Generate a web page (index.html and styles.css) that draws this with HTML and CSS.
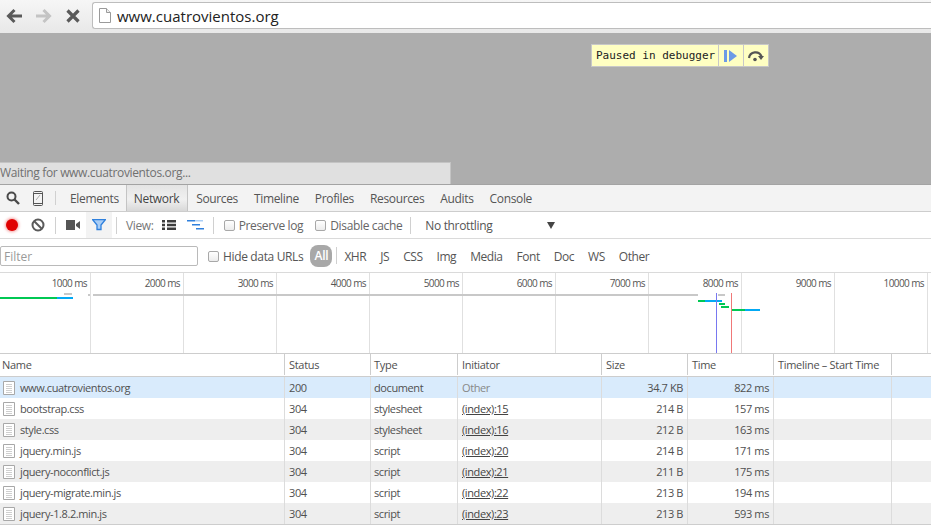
FILE: index.html
```
<!DOCTYPE html>
<html lang="en">
<head>
<meta charset="utf-8">
<title>www.cuatrovientos.org</title>
<link rel="stylesheet" href="styles.css">
</head>
<body>
<header class="browser">
  <svg class="nav" width="18" height="16" viewBox="0 0 18 16"><path d="M17 8H5M9.500 2 3.500 8l6 6" fill="none" stroke="#5a5a5a" stroke-width="3"/></svg>
  <svg class="nav" width="18" height="16" viewBox="0 0 18 16"><path d="M1 8h12M8.500 2l6 6-6 6" fill="none" stroke="#c4c4c4" stroke-width="3"/></svg>
  <svg class="nav" width="16" height="16" viewBox="0 0 16 16"><path d="M2.500 2.500l11 11M13.500 2.500l-11 11" fill="none" stroke="#5a5a5a" stroke-width="3.200"/></svg>
  <div class="omnibox">
    <svg width="12" height="15" viewBox="0 0 12 15"><path d="M.5.500h7l4 4v10H.5z" fill="#fff" stroke="#9a9a9a"/><path d="M7.500.500v4h4" fill="#eee" stroke="#9a9a9a"/></svg>
    <span>www.cuatrovientos.org</span>
  </div>
</header>

<section class="page">
  <div class="paused">
    <span class="paused-text">Paused in debugger</span>
    <span class="paused-btn"><svg width="14" height="12" viewBox="0 0 14 12"><path d="M0 0h3v12H0z" fill="#6d9be6"/><path d="M5 0l8 6-8 6z" fill="#6d9be6"/></svg></span>
    <span class="paused-btn"><svg width="18" height="12" viewBox="0 0 18 12"><path d="M2 8a6.500 6.500 0 0 1 12.500-1.500" fill="none" stroke="#555" stroke-width="2.200"/><path d="M11 6h6l-3 4z" fill="#555"/><circle cx="8" cy="9.500" r="1.800" fill="#555"/></svg></span>
  </div>
  <div class="status-bubble">Waiting for www.cuatrovientos.org...</div>
</section>

<nav class="tabs">
  <svg class="tab-icon" width="14" height="14" viewBox="0 0 14 14"><circle cx="5.500" cy="5.500" r="4" fill="none" stroke="#4a4a4a" stroke-width="2"/><path d="M8.500 8.500l4.500 4.500" stroke="#4a4a4a" stroke-width="2.400"/></svg>
  <svg class="tab-icon device" width="10" height="15" viewBox="0 0 10 15"><rect x=".5" y=".5" width="9" height="14" rx="1" fill="none" stroke="#555"/><path d="M1 2.500h8M1 12.500h8" stroke="#555"/><path d="M3 9l4-5" stroke="#aaa"/></svg>
  <i class="sep tab-sep"></i>
  <span class="tab">Elements</span>
  <span class="tab active">Network</span>
  <span class="tab">Sources</span>
  <span class="tab">Timeline</span>
  <span class="tab">Profiles</span>
  <span class="tab">Resources</span>
  <span class="tab">Audits</span>
  <span class="tab">Console</span>
</nav>

<div class="toolbar">
  <span class="record"></span>
  <svg class="tool-clear" width="14" height="14" viewBox="0 0 14 14"><circle cx="7" cy="7" r="5.500" fill="none" stroke="#5a5a5a" stroke-width="2"/><path d="M3 3l8 8" stroke="#5a5a5a" stroke-width="2"/></svg>
  <i class="sep sep-a"></i>
  <svg class="tool-cam" width="14" height="10" viewBox="0 0 14 10"><path d="M0 0h9v10H0zM10 4l4-3v8l-4-3z" fill="#555"/></svg>
  <span class="filter-btn"><svg width="14" height="12" viewBox="0 0 14 12"><path d="M.5.500h13l-4.500 5.500v4.500H5V6z" fill="#a9cdf5" stroke="#2f80dd" stroke-width="1.300"/></svg></span>
  <i class="sep"></i>
  <span class="view-label">View:</span>
  <svg class="view-list" width="14" height="10" viewBox="0 0 14 10"><path d="M0 0h3v2.500H0zM5 0h9v2.500H5zM0 3.750h3v2.500H0zM5 3.750h9v2.500H5zM0 7.500h3V10H0zM5 7.500h9V10H5z" fill="#3c3c3c"/></svg>
  <svg class="view-wf" width="17" height="10" viewBox="0 0 17 10"><path d="M0 0h8v1.500H0zM5 4h8v1.500H5zM9 8h8v1.500H9z" fill="#2f80dd"/><path d="M8 0h8v1.500H8z" fill="#a9cdf5"/></svg>
  <i class="sep"></i>
  <label class="check preserve"><i class="box"></i>Preserve log</label>
  <label class="check cache"><i class="box"></i>Disable cache</label>
  <i class="sep"></i>
  <span class="throttle">No throttling</span>
  <span class="caret"></span>
</div>

<div class="filterbar">
  <input class="filter-input" type="text" placeholder="Filter">
  <label class="check hide-urls"><i class="box"></i>Hide data URLs</label>
  <span class="pill">All</span>
  <i class="sep pill-sep"></i>
  <span class="type">XHR</span>
  <span class="type">JS</span>
  <span class="type">CSS</span>
  <span class="type">Img</span>
  <span class="type">Media</span>
  <span class="type">Font</span>
  <span class="type">Doc</span>
  <span class="type">WS</span>
  <span class="type">Other</span>
</div>

<section class="overview">
  <div class="tick first">1000 ms</div>
  <div class="tick">2000 ms</div>
  <div class="tick">3000 ms</div>
  <div class="tick">4000 ms</div>
  <div class="tick">5000 ms</div>
  <div class="tick">6000 ms</div>
  <div class="tick">7000 ms</div>
  <div class="tick">8000 ms</div>
  <div class="tick">9000 ms</div>
  <div class="tick">10000 ms</div>
  <i class="bar gray g1"></i>
  <i class="bar gray g2"></i>
  <i class="bar gray g3"></i>
  <i class="bar gray g4"></i>
  <i class="bar green b1"></i>
  <i class="bar blue b2"></i>
  <i class="bar green b3"></i>
  <i class="bar blue b4"></i>
  <i class="bar green b5"></i>
  <i class="bar green b6"></i>
  <i class="bar green b7"></i>
  <i class="bar blue b8"></i>
  <i class="mark dom"></i>
  <i class="mark load"></i>
</section>

<section class="grid">
  <div class="row head">
    <div>Name</div><div>Status</div><div>Type</div><div>Initiator</div><div>Size</div><div>Time</div><div>Timeline – Start Time</div><div></div>
  </div>
  <div class="row selected">
    <div class="name"><svg class="file"><use href="#doc"/></svg>www.cuatrovientos.org</div><div>200</div><div>document</div><div class="other">Other</div><div class="num">34.7 KB</div><div class="num">822 ms</div><div></div><div></div>
  </div>
  <div class="row">
    <div class="name"><svg class="file"><use href="#doc"/></svg>bootstrap.css</div><div>304</div><div>stylesheet</div><div><a>(index):15</a></div><div class="num">214 B</div><div class="num">157 ms</div><div></div><div></div>
  </div>
  <div class="row alt">
    <div class="name"><svg class="file"><use href="#doc"/></svg>style.css</div><div>304</div><div>stylesheet</div><div><a>(index):16</a></div><div class="num">212 B</div><div class="num">163 ms</div><div></div><div></div>
  </div>
  <div class="row">
    <div class="name"><svg class="file"><use href="#doc"/></svg>jquery.min.js</div><div>304</div><div>script</div><div><a>(index):20</a></div><div class="num">214 B</div><div class="num">171 ms</div><div></div><div></div>
  </div>
  <div class="row alt">
    <div class="name"><svg class="file"><use href="#doc"/></svg>jquery-noconflict.js</div><div>304</div><div>script</div><div><a>(index):21</a></div><div class="num">211 B</div><div class="num">175 ms</div><div></div><div></div>
  </div>
  <div class="row">
    <div class="name"><svg class="file"><use href="#doc"/></svg>jquery-migrate.min.js</div><div>304</div><div>script</div><div><a>(index):22</a></div><div class="num">213 B</div><div class="num">194 ms</div><div></div><div></div>
  </div>
  <div class="row alt">
    <div class="name"><svg class="file"><use href="#doc"/></svg>jquery-1.8.2.min.js</div><div>304</div><div>script</div><div><a>(index):23</a></div><div class="num">213 B</div><div class="num">593 ms</div><div></div><div></div>
  </div>
</section>

<svg class="defs" width="0" height="0">
  <symbol id="doc" viewBox="0 0 12 14">
    <path d="M.5.500h11v13H.5z" fill="#fff" stroke="#a8a8a8"/>
    <path d="M3 3.500h6M3 5.500h6M3 7.500h6M3 9.500h6M3 11.500h6" stroke="#cfcfcf"/>
  </symbol>
</svg>
</body>
</html>
```

FILE: styles.css
```
* { box-sizing: border-box; }
html, body { margin: 0; padding: 0; }
body {
  width: 931px;
  height: 527px;
  overflow: hidden;
  background: #fff;
  font-family: "Open Sans", "Noto Sans", sans-serif;
  font-size: 12px;
  letter-spacing: -0.35px;
  color: #444;
}
i { display: block; font-style: normal; }

/* browser chrome */
.browser {
  height: 33px;
  display: flex;
  align-items: center;
  padding: 0 0 2px 5px;
  background: linear-gradient(#f6f6f6, #e8e8e8);
}
.nav { margin-right: 12px; flex: none; }
.browser .nav:nth-child(3) { margin-right: 11px; }
.omnibox {
  flex: 1;
  align-self: flex-start;
  height: 27px;
  margin-top: 2px;
  display: flex;
  align-items: center;
  gap: 6px;
  padding-left: 6px;
  background: #fff;
  border: 1px solid #bdbdbd;
  border-right: 0;
  border-radius: 3px 0 0 3px;
  font-size: 15px;
  letter-spacing: 0;
  color: #222;
}

/* page */
.page {
  position: relative;
  height: 151px;
  background: #adadad;
}
.paused {
  position: absolute;
  left: 591px;
  top: 11px;
  height: 23px;
  display: flex;
  background: #ffffc2;
  border: 1px solid #c8c8c8;
  font-family: "DejaVu Sans Mono", "Liberation Mono", monospace;
  font-size: 11px;
  letter-spacing: 0;
  color: #222;
}
.paused-text { padding: 4px 3px 0 4px; white-space: nowrap; }
.paused-btn {
  display: flex;
  align-items: center;
  justify-content: center;
  width: 25px;
  border-left: 1px solid #c8c8c8;
}
.status-bubble {
  position: absolute;
  left: 0;
  bottom: 0;
  width: 451px;
  height: 22px;
  padding: 1px 0 0 0;
  background: #e0e0e0;
  border-top: 1px solid #c4c4c4;
  border-right: 1px solid #c4c4c4;
  font-size: 12px;
  color: #707070;
}

/* tabs */
.tabs {
  height: 28px;
  display: flex;
  align-items: stretch;
  background: #f3f3f3;
  border-top: 1px solid #a3a3a3;
  border-bottom: 1px solid #cdcdcd;
}
.tab-icon { align-self: center; margin-left: 6px; flex: none; }
.device { margin-left: 13px; }
.tab-sep { margin: 6px 6px 6px 12px; }
.tab {
  display: flex;
  align-items: center;
  padding: 0 8px;
  color: #555;
}
.tab:nth-of-type(1) { padding-right: 7px; }
.tab.active {
  padding: 0 8px 0 7px;
  color: #444;
  background: linear-gradient(#e4e4e4, #f0f0f0 55%, #d8d8d8);
  border-left: 1px solid #c4c4c4;
  border-right: 1px solid #c4c4c4;
}
.sep {
  flex: none;
  width: 1px;
  background: #d0d0d0;
}

/* toolbar */
.toolbar {
  height: 27px;
  display: flex;
  align-items: center;
  background: #fff;
  border-bottom: 1px solid #dadada;
}
.toolbar .sep { height: 17px; }
.record {
  width: 12px;
  height: 12px;
  margin-left: 6px;
  border-radius: 50%;
  background: #e00000;
  box-shadow: 0 0 3px 1px #f4a0a0;
}
.tool-clear { margin-left: 13px; flex: none; }
.sep-a { margin-left: 10px; }
.tool-cam { margin-left: 10px; flex: none; }
.filter-btn {
  width: 26px;
  height: 26px;
  margin-left: 6px;
  margin-right: 4px;
  display: flex;
  align-items: center;
  justify-content: center;
  background: #f3f3f3;
}
.view-label { margin-left: 9px; color: #777; }
.view-list { margin-left: 8px; flex: none; }
.view-wf { margin-left: 11px; margin-right: 9px; flex: none; }
.check {
  display: flex;
  align-items: center;
  color: #666;
  white-space: nowrap;
}
.preserve { margin-left: 10px; }
.cache { margin-left: 12px; margin-right: 8px; }
.box {
  width: 11px;
  height: 11px;
  margin-right: 4px;
  border: 1px solid #a8a8a8;
  border-radius: 2px;
  background: linear-gradient(#fff, #ececec);
}
.throttle { margin-left: 14px; width: 122px; color: #555; }
.caret {
  width: 0;
  height: 0;
  border-left: 4px solid transparent;
  border-right: 4px solid transparent;
  border-top: 7px solid #444;
}

/* filter bar */
.filterbar {
  height: 34px;
  display: flex;
  align-items: center;
  background: #fff;
  border-bottom: 1px solid #dadada;
}
.filterbar > span, .hide-urls { padding-top: 1px; }
.filter-input {
  width: 198px;
  height: 20px;
  padding: 1px 3px 0;
  border: 1px solid #bababa;
  border-radius: 2px;
  background: #fff;
  font: inherit;
  outline: 0;
}
.filter-input::placeholder { color: #9a9a9a; opacity: 1; }
.hide-urls { margin-left: 10px; color: #555; }
.filterbar > .pill {
  width: 22px;
  height: 22px;
  margin-left: 7px;
  padding-top: 0;
  border-radius: 8px;
  background: #a8a8a8;
  color: #fff;
  text-align: center;
  line-height: 21px;
  font-weight: 600;
}
.pill-sep { height: 17px; margin-left: 4px; margin-right: 7px; }
.type { margin-right: 14px; letter-spacing: -0.45px; color: #555; }

/* overview */
.overview {
  position: relative;
  height: 81px;
  display: flex;
  background: #fff;
  border-bottom: 1px solid #cdcdcd;
}
.tick {
  flex: none;
  width: 93px;
  padding: 3px 3px 0 0;
  border-right: 1px solid #e0e0e0;
  text-align: right;
  font-size: 10px;
  letter-spacing: -0.6px;
  color: #555;
}
.tick.first { width: 91px; }
.bar { position: absolute; height: 2px; }
.gray { background: #c8c8c8; top: 21px; }
.green { background: #00c853; }
.blue { background: #03a9f4; }
.g1 { left: 64px; width: 8px; top: 20px; }
.g2 { left: 88px; width: 2px; }
.g3 { left: 93px; width: 605px; }
.g4 { left: 718px; width: 7px; }
.b1 { left: 0; top: 24px; width: 57px; }
.b2 { left: 57px; top: 24px; width: 16px; }
.b3 { left: 698px; top: 27px; width: 7px; }
.b4 { left: 705px; top: 27px; width: 17px; }
.b5 { left: 719px; top: 30px; width: 6px; }
.b6 { left: 721px; top: 33px; width: 8px; }
.b7 { left: 732px; top: 36px; width: 13px; }
.b8 { left: 745px; top: 36px; width: 15px; }
.mark { position: absolute; top: 20px; bottom: 0; width: 1px; }
.dom { left: 716px; background: #7878f0; }
.load { left: 731px; background: #f07878; }

/* grid */
.grid { border-bottom: 1px solid #cdcdcd; }
.row {
  height: 21px;
  display: grid;
  grid-template-columns: 285px 86px 87px 144px 86px 86px 118px 39px;
  align-items: stretch;
  background: #fff;
}
.row > div {
  display: flex;
  align-items: center;
  padding: 0 4px;
  border-right: 1px solid #dcdcdc;
  white-space: nowrap;
  font-size: 11px;
  letter-spacing: -0.4px;
  color: #505050;
}
.row > div:nth-child(3) { padding-left: 3px; }
.row > div:last-child { border-right: 0; }
.row.head {
  height: 23px;
  padding-bottom: 1px;
  border-bottom: 1px solid #cdcdcd;
}
.row.head > div { border-right-color: #cdcdcd; letter-spacing: -0.3px; }
.row.head > div:first-child { padding-left: 2px; }
.row.selected { background: #d9ebfc; }
.row.alt { background: #eeeeee; }
.row > .num { justify-content: flex-end; padding-right: 4px; }
.row > .name { padding-left: 3px; }
.row > .other { color: #888; }
.row a { text-decoration: underline; color: #444; }
.file { width: 12px; height: 14px; margin-right: 5px; flex: none; }
.defs { position: absolute; }
```
